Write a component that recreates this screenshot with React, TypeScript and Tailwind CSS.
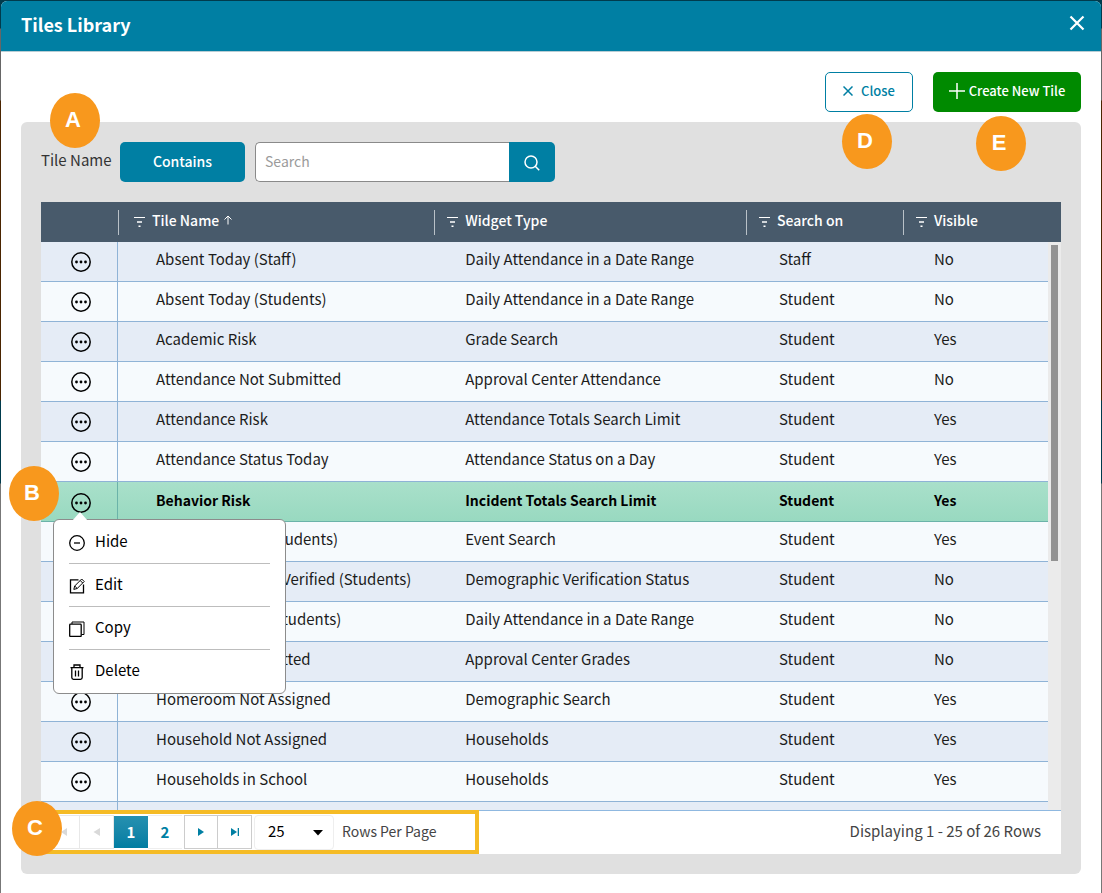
import { ReactNode } from 'react';
import clsx from 'clsx';

interface Tile {
  name: string;
  widget: string;
  searchOn: string;
  visible: boolean;
}

const tiles: Tile[] = [
  { name: 'Absent Today (Staff)', widget: 'Daily Attendance in a Date Range', searchOn: 'Staff', visible: false },
  { name: 'Absent Today (Students)', widget: 'Daily Attendance in a Date Range', searchOn: 'Student', visible: false },
  { name: 'Academic Risk', widget: 'Grade Search', searchOn: 'Student', visible: true },
  { name: 'Attendance Not Submitted', widget: 'Approval Center Attendance', searchOn: 'Student', visible: false },
  { name: 'Attendance Risk', widget: 'Attendance Totals Search Limit', searchOn: 'Student', visible: true },
  { name: 'Attendance Status Today', widget: 'Attendance Status on a Day', searchOn: 'Student', visible: true },
  { name: 'Behavior Risk', widget: 'Incident Totals Search Limit', searchOn: 'Student', visible: true },
  { name: 'Birthday Today (Students)', widget: 'Event Search', searchOn: 'Student', visible: true },
  { name: 'Demographic Not Verified (Students)', widget: 'Demographic Verification Status', searchOn: 'Student', visible: false },
  { name: 'Early Departure (Students)', widget: 'Daily Attendance in a Date Range', searchOn: 'Student', visible: false },
  { name: 'Grades Not Submitted', widget: 'Approval Center Grades', searchOn: 'Student', visible: false },
  { name: 'Homeroom Not Assigned', widget: 'Demographic Search', searchOn: 'Student', visible: true },
  { name: 'Household Not Assigned', widget: 'Households', searchOn: 'Student', visible: true },
  { name: 'Households in School', widget: 'Households', searchOn: 'Student', visible: true },
];

const selectedTile = 'Behavior Risk';

function FilterIcon() {
  return (
    <svg className="size-3 shrink-0" viewBox="0 0 12 12" fill="none" stroke="white">
      <path d="M0 1.500h11" />
      <path d="M3 6h5M4.500 10.300h2" strokeWidth="1.500" />
    </svg>
  );
}

function MoreIcon() {
  return (
    <svg className="size-5" viewBox="0 0 20 20">
      <circle cx="10" cy="10" r="9.200" fill="none" stroke="black" strokeWidth="1.500" />
      <circle cx="5.500" cy="10" r="1.400" />
      <circle cx="10" cy="10" r="1.400" />
      <circle cx="14.500" cy="10" r="1.400" />
    </svg>
  );
}

function Marker({ label, className }: { label: string; className: string }) {
  return (
    <span
      className={clsx(
        'absolute z-30 flex h-[55px] w-[50px] items-center justify-center rounded-[50%] bg-[#f8981d] pr-1 pb-[2px] font-["Liberation_Sans",sans-serif] text-[22px] leading-none font-bold text-white',
        className
      )}
    >
      {label}
    </span>
  );
}

const menuItems: { label: string; icon: ReactNode }[] = [
  {
    label: 'Hide',
    icon: (
      <>
        <circle cx="8" cy="8" r="7.300" />
        <path d="M5 8h6" />
      </>
    ),
  },
  {
    label: 'Edit',
    icon: (
      <>
        <path d="M9.500 1.800H1.500v13h13V6.500" />
        <path
          d="M4.800 11.400l.9-3.400L12.700 1l2.500 2.500-7 7-3.400.9zM11.200 2.500l2.500 2.500M5.700 8l2.500 2.500"
          strokeWidth="1"
        />
      </>
    ),
  },
  {
    label: 'Copy',
    icon: (
      <>
        <rect x=".7" y="3.200" width="11.500" height="12.300" rx=".8" />
        <path d="M3 3V1h12v12.500h-2.500" strokeWidth="1" />
      </>
    ),
  },
  {
    label: 'Delete',
    icon: (
      <>
        <path d="M1.500 3.700h13M5 3.500V1h6v2.500M2.800 4v9.500c0 1 .7 1.800 1.700 1.800h7c1 0 1.700-.8 1.700-1.800V4" />
        <path d="M6.500 6.500v6M9.500 6.500v6" />
      </>
    ),
  },
];

function RowMenu() {
  return (
    <div className="absolute top-[37px] left-3 z-20 w-[233px] rounded-md border border-[#8c8c8c] bg-white px-[15px] py-px font-normal">
      {/* Pointer */}
      <svg className="absolute -top-2 left-[18px] h-[9px] w-4" viewBox="0 0 16 9">
        <path d="M0 9L8 0l8 9z" fill="white" />
      </svg>
      <ul className="divide-y divide-[#bdbdbd]">
        {menuItems.map((item) => (
          <li key={item.label}>
            <button type="button" className="flex h-[42px] w-full items-center gap-[10px] pb-[2px] text-left">
              <svg
                className="mt-1 size-4 shrink-0"
                viewBox="0 0 16 16"
                fill="none"
                stroke="black"
                strokeWidth="1.300"
              >
                {item.icon}
              </svg>
              {item.label}
            </button>
          </li>
        ))}
      </ul>
    </div>
  );
}

function HeaderCell({ children, className }: { children: ReactNode; className: string }) {
  return (
    <th className="sticky top-0 z-10 h-10 bg-[#485a6b] p-0 text-left text-[14px] font-medium text-white">
      <div className={clsx('flex h-[25px] items-center gap-[6px] border-l border-[#b9c1c8]', className)}>
        <FilterIcon />
        <span className="flex items-center gap-1 pb-1">{children}</span>
      </div>
    </th>
  );
}

function TileTable() {
  return (
    <div className="relative min-h-0 flex-1 overflow-hidden">
      <table className="w-full table-fixed border-separate border-spacing-0">
        <colgroup>
          <col className="w-[77px]" />
          <col className="w-[31%]" />
          <col />
          <col className="w-[157px]" />
          <col className="w-[158px]" />
        </colgroup>
        <thead>
          <tr>
            <th className="sticky top-0 z-10 h-10 bg-[#485a6b]" aria-label="Actions" />
            <HeaderCell className="pl-[15px]">
              Tile Name
              <svg className="size-[10px]" viewBox="0 0 10 10" fill="none" stroke="white">
                <path d="M5 9.500V1M1.500 4.500L5 1l3.500 3.500" />
              </svg>
            </HeaderCell>
            <HeaderCell className="pl-3">Widget Type</HeaderCell>
            <HeaderCell className="pl-3">Search on</HeaderCell>
            <HeaderCell className="pl-3">Visible</HeaderCell>
          </tr>
        </thead>
        <tbody className="text-[#1c1c1c]">
          {tiles.map((tile) => {
            const selected = tile.name === selectedTile;
            return (
              <tr
                key={tile.name}
                className={clsx(
                  'whitespace-nowrap *:h-10 *:border-b *:p-0',
                  selected
                    ? 'bg-linear-to-b from-[#a9e0ca] to-[#98d9c0] text-[14px] font-bold text-black *:border-[#6bb3a9] *:pb-1'
                    : 'odd:bg-[#e5ecf6] even:bg-[#f6fafd] *:border-[#8fb3d6] *:pb-[6px]'
                )}
              >
                <td className="relative border-r text-[15px]">
                  <button
                    type="button"
                    aria-label={`Actions for ${tile.name}`}
                    className="ml-[30px] block pt-[6px]"
                  >
                    <MoreIcon />
                  </button>
                  {selected && <RowMenu />}
                </td>
                <td>
                  <div className="pl-[38px]">{tile.name}</div>
                </td>
                <td>
                  <div className="pl-[31px]">{tile.widget}</div>
                </td>
                <td>
                  <div className="pl-[33px]">{tile.searchOn}</div>
                </td>
                <td>
                  <div className="pl-[31px]">{tile.visible ? 'Yes' : 'No'}</div>
                </td>
              </tr>
            );
          })}
          {/* Next row, still loading */}
          <tr className="bg-[#e5ecf6]">
            <td className="h-10 border-r border-[#8fb3d6]" />
            <td colSpan={4} />
          </tr>
        </tbody>
      </table>

      {/* Scrollbar */}
      <div className="absolute top-10 right-0 bottom-0 w-[13px] bg-[#ebebeb] px-[3px] pt-[3px]">
        <div className="h-[56%] bg-[#939393]" />
      </div>
    </div>
  );
}

function Pager() {
  return (
    <div className="relative flex h-11 shrink-0 items-center justify-between border-t border-[#8fb8e0] bg-white pr-5 text-[#444]">
      <div className="-mt-px flex h-11 w-[438px] items-center border-4 border-[#f5bb25]">
        <button type="button" aria-label="First page" className="flex h-[34px] w-[35px] items-center justify-center border border-[#e8e8e8]">
          <svg className="size-2" viewBox="0 0 8 8" fill="#d9d9d9">
            <path d="M8 0v8L2 4zM0 0h1.300v8H0z" />
          </svg>
        </button>
        <button type="button" aria-label="Previous page" className="flex h-[34px] w-[34px] items-center justify-center border border-l-0 border-[#e8e8e8]">
          <svg className="size-2" viewBox="0 0 8 8" fill="#d9d9d9">
            <path d="M7 0v8L.5 4z" />
          </svg>
        </button>
        <button type="button" className="h-8 w-[34px] bg-linear-to-b from-[#2590b0] to-[#007da2] pb-px font-bold text-white">
          1
        </button>
        <button type="button" className="mr-[2px] h-[34px] w-[34px] border-y border-[#eee] pb-px font-bold text-[#007fa3]">
          2
        </button>
        <button type="button" aria-label="Next page" className="flex h-[34px] w-[34px] items-center justify-center border border-[#ccc]">
          <svg className="size-2" viewBox="0 0 8 8" fill="#007fa3">
            <path d="M1 0v8l6-4z" />
          </svg>
        </button>
        <button type="button" aria-label="Last page" className="flex h-[34px] w-[34px] items-center justify-center border border-l-0 border-[#ccc]">
          <svg className="size-2" viewBox="0 0 8 8" fill="#007fa3">
            <path d="M0 0v8l6-4zM6.700 0H8v8H6.700z" />
          </svg>
        </button>
        <div className="relative ml-[2px]">
          <select
            id="rows-per-page"
            defaultValue="25"
            className="block h-[35px] w-20 appearance-none rounded-sm border border-[#eee] bg-white pb-[2px] pl-[13px] text-black"
          >
            <option>25</option>
            <option>50</option>
            <option>100</option>
          </select>
          <svg className="pointer-events-none absolute top-[15px] right-[11px] h-[6px] w-[10px]" viewBox="0 0 10 6">
            <path d="M0 0h10L5 5.500z" />
          </svg>
        </div>
        <label htmlFor="rows-per-page" className="ml-2 pb-[2px] text-[14px] whitespace-nowrap">
          Rows Per Page
        </label>
      </div>
      <span className="pb-[3px]">Displaying 1 - 25 of 26 Rows</span>
      <Marker label="C" className="-top-[10px] -left-[29px]" />
    </div>
  );
}

export default function App() {
  return (
    <div className='h-screen min-h-[600px] bg-[linear-gradient(#003b4d_28px,#666_29px,#666_100px,#4a2400_101px,#4a2400_400px,#003b4d_401px,#003b4d_483px,#777_484px)] px-px pt-px font-["Noto_Sans_CJK_JP","Noto_Sans_CJK_SC",sans-serif] text-[15px] leading-5'>
      <div role="dialog" aria-labelledby="dialog-title" className="flex h-full flex-col rounded-t-md bg-white">
        {/* Title bar */}
        <header className="flex h-[51px] shrink-0 items-center justify-between rounded-t-md border-b border-[#b8cdd4] bg-[#007fa3] pr-4 pb-1 pl-5 text-white">
          <h1 id="dialog-title" className="text-[18px] leading-6 font-bold">
            Tiles Library
          </h1>
          <button type="button" aria-label="Close dialog" className="pb-[2px]">
            <svg className="size-4" viewBox="0 0 16 16" fill="none" stroke="white" strokeWidth="2.200">
              <path d="M1.500 1.500l13 13M14.500 1.500l-13 13" />
            </svg>
          </button>
        </header>

        <main className="flex min-h-0 flex-1 flex-col px-5 pt-5 pb-[19px]">
          {/* Actions */}
          <div className="flex justify-end gap-5 pb-[10px] text-[13px]">
            <div className="relative">
              <button
                type="button"
                className="flex h-10 w-[88px] items-center justify-center gap-2 rounded-[5px] border border-[#007fa3] pb-[3px] font-medium text-[#007fa3]"
              >
                <svg className="size-[10px]" viewBox="0 0 10 10" fill="none" stroke="currentColor" strokeWidth="1.500">
                  <path d="M.5.5l9 9M9.500.5l-9 9" />
                </svg>
                Close
              </button>
              <Marker label="D" className="top-[42px] left-[17px]" />
            </div>
            <div className="relative">
              <button
                type="button"
                className="flex h-10 w-[148px] items-center justify-center gap-1 rounded-[5px] bg-[#008a00] pb-[3px] font-medium whitespace-nowrap text-white"
              >
                <svg className="size-4 shrink-0" viewBox="0 0 16 16" fill="none" stroke="currentColor" strokeWidth="1.500">
                  <path d="M8 0v16M0 8h16" />
                </svg>
                Create New Tile
              </button>
              <Marker label="E" className="top-11 left-[43px]" />
            </div>
          </div>

          <section className="relative flex min-h-0 flex-1 flex-col rounded-md bg-[#e0e0e0] p-5">
            {/* Filter */}
            <div className="relative mb-5 flex items-center">
              <Marker label="A" className="-top-[49px] left-[9px]" />
              <label htmlFor="tile-search" className="w-[79px] shrink-0 pb-1 whitespace-nowrap text-[#333]">
                Tile Name
              </label>
              <button type="button" className="mr-[10px] h-10 w-[125px] rounded-[5px] bg-[#007fa3] pb-[2px] text-[14px] font-medium text-white">
                Contains
              </button>
              <input
                id="tile-search"
                type="text"
                placeholder="Search"
                className="h-10 w-[254px] rounded-l-[5px] border border-r-0 border-[#8a8a8a] bg-white px-[9px] pb-[2px] text-[14px] outline-none placeholder:text-[#9b9b9b]"
              />
              <button
                type="button"
                aria-label="Search"
                className="flex h-10 w-[46px] items-center justify-center rounded-r-[5px] bg-[#007fa3]"
              >
                <svg className="mt-[2px] size-4" viewBox="0 0 16 16" fill="none" stroke="white" strokeWidth="1.500">
                  <circle cx="7" cy="7" r="6" />
                  <path d="M11.200 11.200l4 4" />
                </svg>
              </button>
            </div>

            <TileTable />
            <Pager />
            <Marker label="B" className="top-[344px] -left-3" />
          </section>
        </main>
      </div>
    </div>
  );
}
